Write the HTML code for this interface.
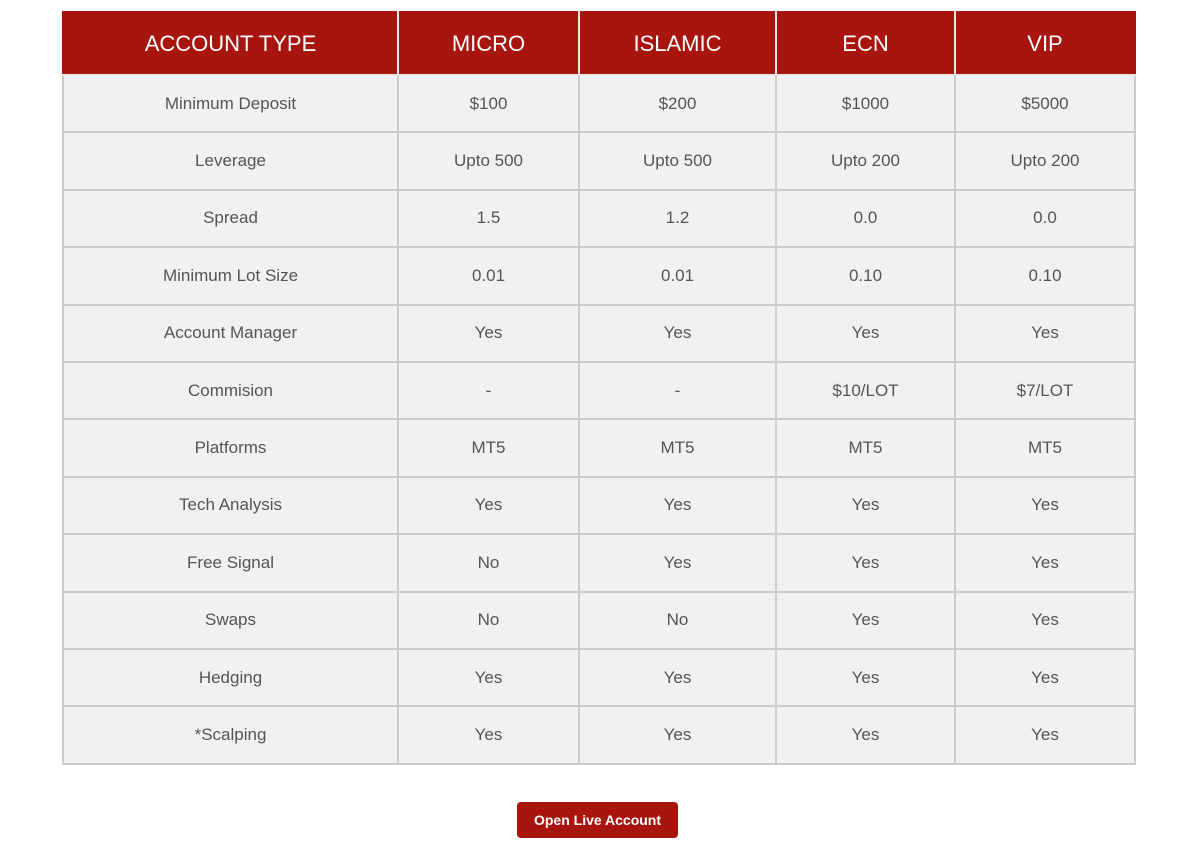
<!DOCTYPE html>
<html><head><meta charset="utf-8"><style>
html,body{margin:0;padding:0;background:#fff;width:1200px;height:847px;overflow:hidden;font-family:"Liberation Sans",sans-serif}
table{position:absolute;left:62px;top:11px;border-collapse:collapse;table-layout:fixed;width:1072px}
td,th{border:2px solid #cbcbcb;text-align:center;padding:0}
th{background:#a8150f;color:#fff;font-weight:normal;font-size:22px;height:61px;border-color:#e8e8e8;border-top-color:#a8150f}
th:first-child{border-left-color:#a8150f}th:last-child{border-right-color:#a8150f}
td{background:#f1f1f1;color:#555;font-size:17px;height:55.4px}
.btn{position:absolute;left:517px;top:802px;width:161px;height:36px;background:#a8150f;border-radius:4px;color:#fff;font-weight:bold;font-size:14px;line-height:36px;text-align:center}
</style></head><body>
<table>
<colgroup><col style="width:335px"><col style="width:181px"><col style="width:197px"><col style="width:179px"><col style="width:180px"></colgroup>
<tr><th>ACCOUNT TYPE</th><th>MICRO</th><th>ISLAMIC</th><th>ECN</th><th>VIP</th></tr>
<tr><td>Minimum Deposit</td><td>$100</td><td>$200</td><td>$1000</td><td>$5000</td></tr>
<tr><td>Leverage</td><td>Upto 500</td><td>Upto 500</td><td>Upto 200</td><td>Upto 200</td></tr>
<tr><td>Spread</td><td>1.5</td><td>1.2</td><td>0.0</td><td>0.0</td></tr>
<tr><td>Minimum Lot Size</td><td>0.01</td><td>0.01</td><td>0.10</td><td>0.10</td></tr>
<tr><td>Account Manager</td><td>Yes</td><td>Yes</td><td>Yes</td><td>Yes</td></tr>
<tr><td>Commision</td><td>-</td><td>-</td><td>$10/LOT</td><td>$7/LOT</td></tr>
<tr><td>Platforms</td><td>MT5</td><td>MT5</td><td>MT5</td><td>MT5</td></tr>
<tr><td>Tech Analysis</td><td>Yes</td><td>Yes</td><td>Yes</td><td>Yes</td></tr>
<tr><td>Free Signal</td><td>No</td><td>Yes</td><td>Yes</td><td>Yes</td></tr>
<tr><td>Swaps</td><td>No</td><td>No</td><td>Yes</td><td>Yes</td></tr>
<tr><td>Hedging</td><td>Yes</td><td>Yes</td><td>Yes</td><td>Yes</td></tr>
<tr><td>*Scalping</td><td>Yes</td><td>Yes</td><td>Yes</td><td>Yes</td></tr>
</table>
<div class="btn">Open Live Account</div>
</body></html>
